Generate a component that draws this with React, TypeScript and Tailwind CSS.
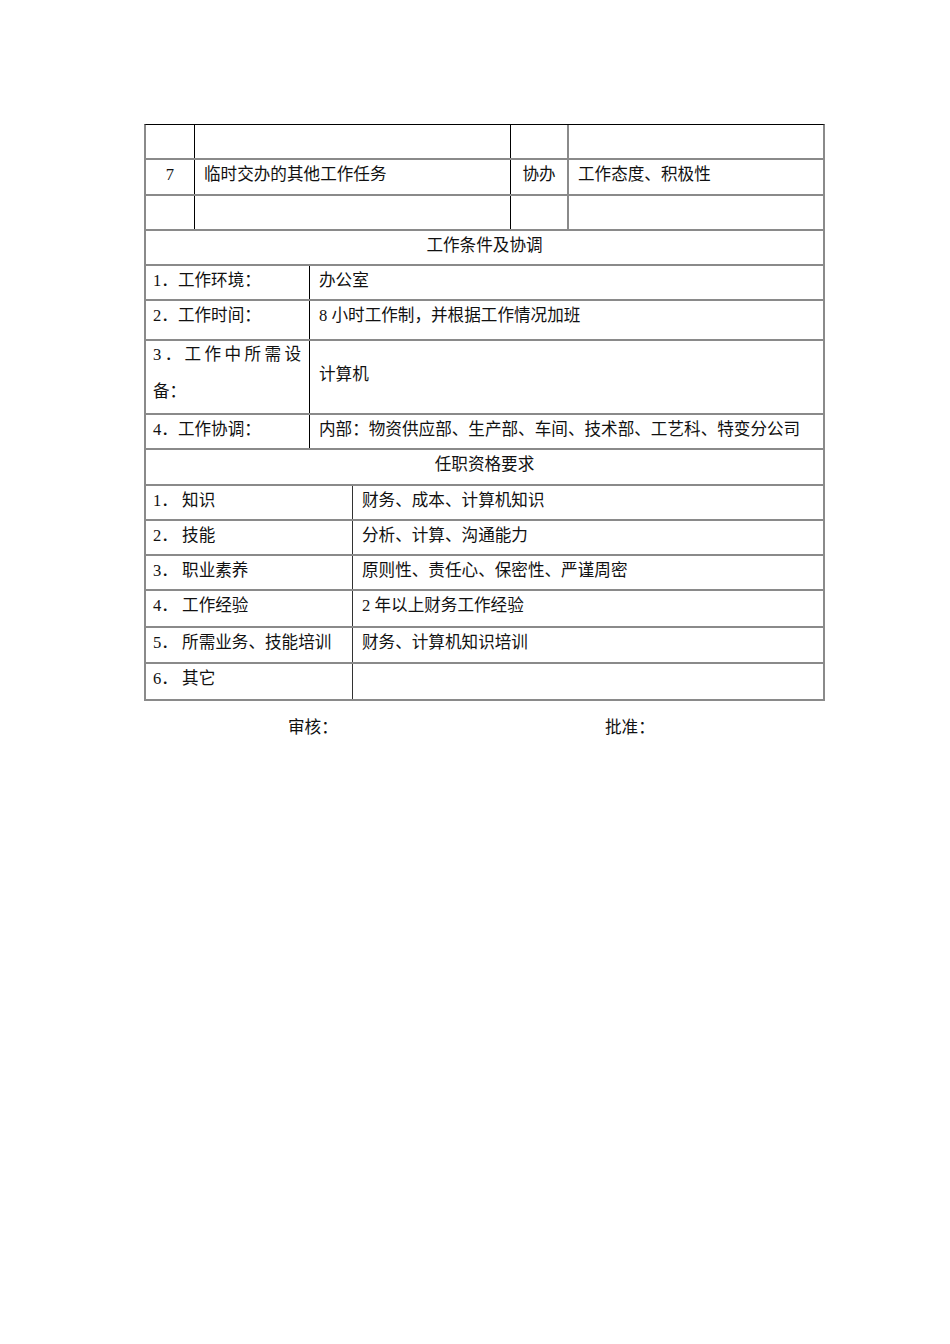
import React from 'react';

const font = { fontFamily: '"Liberation Serif", "Noto Sans CJK SC", serif' };

const Cell: React.FC<{ className?: string; children?: React.ReactNode }> = ({ className = '', children }) => (
  <div className={`pt-[5px] leading-[20px] ${className}`}>{children}</div>
);

const conditions = [
  { label: '1．工作环境：', value: '办公室', h: 'h-[35px]' },
  { label: '2．工作时间：', value: '8 小时工作制，并根据工作情况加班', h: 'h-[40px]' },
];

const quals = [
  { label: '1． 知识', value: '财务、成本、计算机知识', h: 'h-[35px]' },
  { label: '2． 技能', value: '分析、计算、沟通能力', h: 'h-[35px]' },
  { label: '3． 职业素养', value: '原则性、责任心、保密性、严谨周密', h: 'h-[35px]' },
  { label: '4． 工作经验', value: '2 年以上财务工作经验', h: 'h-[37px]' },
  { label: '5． 所需业务、技能培训', value: '财务、计算机知识培训', h: 'h-[36px]' },
  { label: '6． 其它', value: '', h: 'h-[35px]' },
];

export default function App() {
  return (
    <div className="min-h-[1344px] bg-white text-[#111] text-[16.6px]" style={font}>
      <div className="pt-[124px] pl-[144px]">
        <div className="w-[681px] border-t border-t-black border-x-2 border-b-2 border-x-[#8a8a8a] border-b-[#8a8a8a]">
          {/* task rows */}
          {[
            { n: '', task: '', role: '', std: '', h: 'h-[35px]' },
            { n: '7', task: '临时交办的其他工作任务', role: '协办', std: '工作态度、积极性', h: 'h-[36px]' },
            { n: '', task: '', role: '', std: '', h: 'h-[35px]' },
          ].map((r, i) => (
            <div key={i} className={`flex border-b-2 border-[#8a8a8a] ${r.h}`}>
              <Cell className="w-[49px] border-r border-black text-center">{r.n}</Cell>
              <Cell className="w-[316px] border-r border-black pl-[9px]">{r.task}</Cell>
              <Cell className="w-[58px] border-r-2 border-[#8a8a8a] text-center">{r.role}</Cell>
              <Cell className="flex-1 pl-[9px]">{r.std}</Cell>
            </div>
          ))}

          <div className="h-[35px] border-b-2 border-[#8a8a8a]">
            <Cell className="text-center">工作条件及协调</Cell>
          </div>

          {conditions.map((r) => (
            <div key={r.label} className={`flex border-b-2 border-[#8a8a8a] ${r.h}`}>
              <Cell className="w-[164px] border-r border-black pl-[7px]">{r.label}</Cell>
              <Cell className="flex-1 pl-[9px]">{r.value}</Cell>
            </div>
          ))}

          <div className="flex h-[74px] border-b-2 border-[#8a8a8a]">
            <div className="w-[164px] border-r border-black pl-[7px] pt-[4px] leading-[20px]">
              <div className="flex w-[148px] justify-between">
                {['3', '．', '工', '作', '中', '所', '需', '设'].map((c, i) => (
                  <span key={i}>{c}</span>
                ))}
              </div>
              <div className="mt-[17px]">备：</div>
            </div>
            <div className="flex-1 pl-[9px] pt-[24px] leading-[20px]">计算机</div>
          </div>

          <div className="flex h-[35px] border-b-2 border-[#8a8a8a]">
            <Cell className="w-[164px] border-r border-black pl-[7px]">4．工作协调：</Cell>
            <Cell className="flex-1 pl-[9px] whitespace-nowrap">内部：物资供应部、生产部、车间、技术部、工艺科、特变分公司</Cell>
          </div>

          <div className="h-[36px] border-b-2 border-[#8a8a8a]">
            <Cell className="text-center">任职资格要求</Cell>
          </div>

          {quals.map((r, i) => (
            <div key={r.label} className={`flex ${r.h} ${i < quals.length - 1 ? 'border-b-2 border-[#8a8a8a]' : ''}`}>
              <Cell className="w-[207px] border-r border-[#333] pl-[7px] whitespace-pre">{r.label}</Cell>
              <Cell className="flex-1 pl-[9px]">{r.value}</Cell>
            </div>
          ))}
        </div>

        <div className="flex pt-[17px] leading-[20px]">
          <span className="ml-[144px] w-[317px]">审核：</span>
          <span>批准：</span>
        </div>
      </div>
    </div>
  );
}
